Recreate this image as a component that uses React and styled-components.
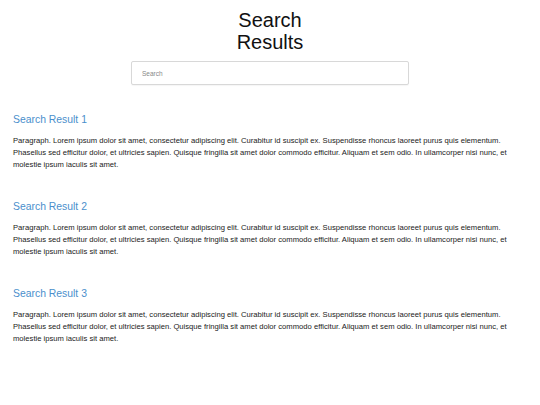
import styled, { createGlobalStyle } from "styled-components";

const GlobalStyle = createGlobalStyle`
  body {
    margin: 0;
    background: #fff;
    font-family: "Liberation Sans", Arial, sans-serif;
    color: #222;
  }
`;

const Page = styled.div`
  padding: 9px 13px 0;
`;

const Header = styled.header`
  display: flex;
  flex-direction: column;
  align-items: center;
`;

const Title = styled.h1`
  margin: 0;
  width: 80px;
  text-align: center;
  font-size: 20px;
  line-height: 22px;
  font-weight: 400;
  color: #111;
`;

const SearchInput = styled.input`
  box-sizing: border-box;
  margin-top: 8px;
  width: 278px;
  height: 24px;
  padding: 0 10px;
  border: 1px solid #d8d8d8;
  border-radius: 2px;
  box-shadow: 0 1px 1px rgba(0, 0, 0, 0.04);
  font-family: inherit;
  font-size: 6.5px;
  color: #333;
  outline: none;

  &::placeholder {
    color: #888;
  }
`;

const Results = styled.div`
  margin-top: 28px;
  display: flex;
  flex-direction: column;
  gap: 29px;
`;

const Result = styled.section``;

const ResultTitle = styled.h2`
  margin: 0 0 8px;
  font-size: 10.4px;
  line-height: 14px;
  font-weight: 400;
  color: #4a8fcc;
`;

const Paragraph = styled.p`
  margin: 0;
  font-size: 7.65px;
  line-height: 12px;
  color: #222;
`;

const text =
  "Paragraph. Lorem ipsum dolor sit amet, consectetur adipiscing elit. Curabitur id suscipit ex. Suspendisse rhoncus laoreet purus quis elementum. Phasellus sed efficitur dolor, et ultricies sapien. Quisque fringilla sit amet dolor commodo efficitur. Aliquam et sem odio. In ullamcorper nisi nunc, et molestie ipsum iaculis sit amet.";

const results = [1, 2, 3];

const App = () => {
  return (
    <>
      <GlobalStyle />
      <Page>
        <Header>
          <Title>Search Results</Title>
          <SearchInput placeholder="Search" />
        </Header>
        <Results>
          {results.map((n) => (
            <Result key={n}>
              <ResultTitle>Search Result {n}</ResultTitle>
              <Paragraph>{text}</Paragraph>
            </Result>
          ))}
        </Results>
      </Page>
    </>
  );
};

export default App;
